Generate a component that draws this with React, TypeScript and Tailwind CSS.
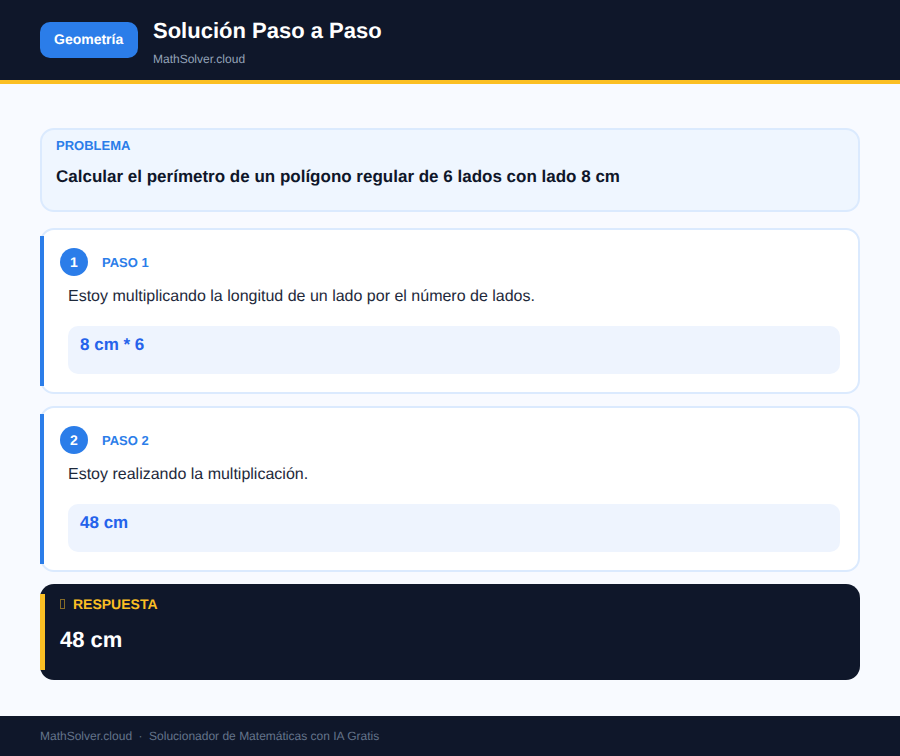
import React from 'react';

const steps = [
  { n: 1, text: 'Estoy multiplicando la longitud de un lado por el número de lados.', math: '8 cm * 6' },
  { n: 2, text: 'Estoy realizando la multiplicación.', math: '48 cm' },
];

const App: React.FC = () => {
  return (
    <div className="h-[756px] w-[900px] flex flex-col overflow-hidden bg-[#f8faff] [text-rendering:geometricPrecision] font-['Liberation_Sans',Arial,sans-serif]">
      {/* Header */}
      <header className="h-[84px] shrink-0 bg-[#0f172a] border-b-4 border-[#fbbf24] px-10 flex items-start gap-[15px]">
        <div className="mt-[22px] w-[98px] h-9 pl-3.5 pb-0.5 rounded-[10px] bg-[#2b7de9] text-white text-sm font-bold flex items-center">
          Geometría
        </div>
        <div>
          <h1 className="mt-[17px] text-[22px] leading-[28px] font-bold text-white">Solución Paso a Paso</h1>
          <p className="mt-[7px] text-xs leading-[14px] text-[#94a3b8]">MathSolver.cloud</p>
        </div>
      </header>

      <main className="flex-1 px-10 pt-11">
        {/* Problem */}
        <section className="h-[84px] rounded-[14px] border-2 border-[#dbeafe] bg-[#eff6ff] px-3.5 pt-2">
          <div className="text-[13px] leading-[15px] font-bold text-[#2b7de9]">PROBLEMA</div>
          <p className="mt-[13px] text-[17px] leading-[22px] font-bold text-[#0f172a]">
            Calcular el perímetro de un polígono regular de 6 lados con lado 8 cm
          </p>
        </section>

        {/* Steps */}
        <div className="mt-4 flex flex-col gap-3">
          {steps.map((step) => (
            <section key={step.n} className="relative h-[166px] rounded-[14px] border-2 border-[#dbeafe] bg-white pl-[18px] pr-[18px] pt-[18px]">
              <div className="absolute left-[-2px] top-[6px] h-[150px] w-1 bg-[#2b7de9]" />
              <div className="flex items-center gap-3.5">
                <div className="w-7 h-7 rounded-full bg-[#2b7de9] text-white text-sm font-bold flex items-center justify-center">
                  {step.n}
                </div>
                <span className="mt-px text-[13px] font-bold text-[#2b7de9]">PASO {step.n}</span>
              </div>
              <p className="mt-[11px] ml-2 text-base leading-5 text-[#1e293b]">{step.text}</p>
              <div className="mt-[19px] ml-2 h-12 rounded-[10px] bg-[#eef4fe] px-3 pt-2 text-[17px] leading-[22px] font-bold text-[#2563eb]">
                {step.math}
              </div>
            </section>
          ))}
        </div>

        {/* Answer */}
        <section className="relative mt-3 h-24 rounded-[14px] bg-[#0f172a] pl-5 pt-[11px]">
          <div className="absolute left-0 top-2.5 h-[76px] w-[5px] bg-[#fbbf24]" />
          <div className="flex items-center gap-2 text-sm leading-[18px] font-bold text-[#fbbf24]">
            <span className="w-[5px] h-[10px] border border-[#fbbf24]/50" />
            <span>RESPUESTA</span>
          </div>
          <div className="mt-[10px] text-[22px] leading-[34px] font-bold text-white">48 cm</div>
        </section>
      </main>

      {/* Footer */}
      <footer className="h-10 shrink-0 bg-[#0f172a] px-10 flex items-center text-xs text-[#64748b]">
        <span>MathSolver.cloud</span>
        <span className="mx-[6.5px]">·</span>
        <span>Solucionador de Matemáticas con IA Gratis</span>
      </footer>
    </div>
  );
};

export default App;
